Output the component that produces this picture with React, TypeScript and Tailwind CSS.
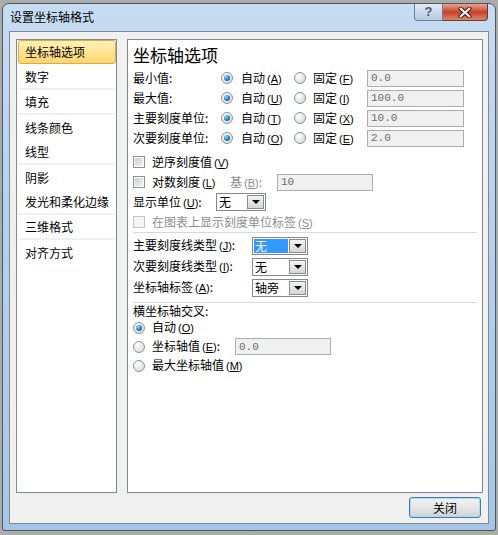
import React from "react";

const font = "font-['Noto_Sans_CJK_SC','Microsoft_YaHei',sans-serif]";

const Mn: React.FC<{k: string}> = ({k}) => (
    <span className="font-['Liberation_Sans',sans-serif] text-[11px] ml-[2px]">(<u>{k}</u>)</span>
);

const Radio: React.FC<{checked?: boolean}> = ({checked}) => (
    <span className="w-[12px] h-[12px] rounded-full border border-[#8f9499] bg-radial-[at_35%_30%] from-white to-[#cfd2d6] flex items-center justify-center shrink-0">
        {checked && <span className="w-[6px] h-[6px] rounded-full bg-radial-[at_35%_30%] from-[#9bd8ff] via-[#2a86cc] to-[#0b3f7a]"/>}
    </span>
);

const Checkbox: React.FC<{disabled?: boolean}> = ({disabled}) => (
    <span className={`w-[12px] h-[12px] border shrink-0 flex items-center justify-center ${disabled ? "border-[#c5c5c5] bg-[#f4f4f4]" : "border-[#8e8f8f] bg-white"}`}>
        <span className={`w-[8px] h-[8px] ${disabled ? "bg-[#f4f4f4]" : "bg-linear-to-br from-[#c9cdd2] to-[#f4f4f4]"}`}/>
    </span>
);

const Input: React.FC<{value: string; className: string}> = ({value, className}) => (
    <div className={`h-[17px] border border-[#abadb3] bg-[#f0f0f0] flex items-center pl-[3px] font-['Liberation_Mono',monospace] text-[11px] text-[#6d6d6d] ${className}`}>
        {value}
    </div>
);

const Select: React.FC<{value: string; className: string; focus?: boolean}> = ({value, className, focus}) => (
    <div className={`h-[18px] border border-[#828790] bg-white flex items-stretch ${className}`}>
        <div className="flex-1 flex items-stretch p-[1px]">
            <span className={`flex-1 flex items-center pl-[1px] ${focus ? "bg-[#3399ff] text-white" : ""}`}>{value}</span>
        </div>
        <div className="w-[17px] m-[1px] ml-0 border border-[#8a8a8a] bg-linear-to-b from-[#f4f4f4] to-[#d6d6d6] flex items-center justify-center">
            <span className="w-0 h-0 border-x-[4px] border-x-transparent border-t-[4px] border-t-black"/>
        </div>
    </div>
);

const navItems = [
    {name: "坐标轴选项", sep: false},
    {name: "数字", sep: true},
    {name: "填充", sep: true},
    {name: "线条颜色", sep: false},
    {name: "线型", sep: true},
    {name: "阴影", sep: false},
    {name: "发光和柔化边缘", sep: true},
    {name: "三维格式", sep: true},
    {name: "对齐方式", sep: false},
];

const axisRows = [
    {label: "最小值:", auto: "A", fixed: "F", value: "0.0"},
    {label: "最大值:", auto: "U", fixed: "I", value: "100.0"},
    {label: "主要刻度单位:", auto: "T", fixed: "X", value: "10.0"},
    {label: "次要刻度单位:", auto: "O", fixed: "E", value: "2.0"},
];

export default function App() {
    return (
        <div className={`w-[498px] h-[535px] overflow-hidden bg-[#a9aca9] pt-[3px] pl-[2px] text-[12px] leading-[14px] text-black ${font}`}>
            <div className="w-[494px] h-[528px] rounded-t-[7px] rounded-b-[3px] border border-[#4b5866] bg-linear-to-b from-[#c6dcf2] via-[#b3cfeb] to-[#a7c6e6] flex flex-col px-[6px] pb-[6px]">
                {/* title bar */}
                <div className="h-[27px] -mx-[6px] flex items-start justify-between">
                    <span className="pl-[7px] pt-[6px]">设置坐标轴格式</span>
                    <div className="flex mr-[7px]">
                        <div className="w-[29px] h-[17px] rounded-bl-[4px] border border-t-0 border-[#6b7f96] bg-linear-to-b from-[#e3ecf6] via-[#c9d8e9] to-[#b7cbe2] flex items-center justify-center font-['Liberation_Sans',sans-serif] font-bold text-[13px] text-[#4d5a68]">?</div>
                        <div className="w-[45px] h-[17px] rounded-br-[4px] border border-l-0 border-t-0 border-[#6b3a30] bg-linear-to-b from-[#eaa393] via-[#c83e28] to-[#dc8468] flex items-center justify-center">
                            <svg width="14" height="11" viewBox="0 0 14 11">
                                <path d="M2.5 1.5 L11.5 9.5 M11.5 1.5 L2.5 9.5" stroke="#3a1a14" strokeWidth="4" strokeLinecap="round"/>
                                <path d="M2.5 1.5 L11.5 9.5 M11.5 1.5 L2.5 9.5" stroke="#ffffff" strokeWidth="2" strokeLinecap="round"/>
                            </svg>
                        </div>
                    </div>
                </div>

                {/* client area */}
                <div className="flex-1 bg-[#f0f0f0] border border-[#7d8b99] flex flex-col pl-[6px] pr-[5px] pt-[7px]">
                    <div className="flex gap-[10px] h-[454px]">
                        {/* nav */}
                        <div className="w-[101px] border border-[#828790] bg-white">
                            {navItems.map((item, i) => (
                                <div key={item.name} className={`h-[25px] ${item.sep ? "border-b-2 border-[#f0f0f4] mx-[1px]" : ""}`}>
                                    {i === 0 ? (
                                        <div className="ml-[1px] w-[98px] h-[24px] rounded-[3px] border border-[#dcac42] bg-linear-to-b from-[#fff1b8] to-[#fdd66c] flex items-center pl-[6px]">
                                            {item.name}
                                        </div>
                                    ) : (
                                        <div className={`h-full flex items-center ${item.sep ? "pl-[7px]" : "pl-[8px]"}`}>{item.name}</div>
                                    )}
                                </div>
                            ))}
                        </div>

                        {/* content */}
                        <div className="w-[356px] border border-[#828790] bg-white pl-[5px] pr-[5px] pt-[4px]">
                            <div className="text-[17px] leading-[22px]">坐标轴选项</div>

                            <div className="mt-[2px]">
                                {axisRows.map((r) => (
                                    <div key={r.label} className="flex items-center h-[20px]">
                                        <span className="w-[88px]">{r.label}</span>
                                        <Radio checked/>
                                        <span className="ml-[8px] w-[53px]">自动<Mn k={r.auto}/></span>
                                        <Radio/>
                                        <span className="ml-[7px] w-[54px]">固定<Mn k={r.fixed}/></span>
                                        <Input value={r.value} className="w-[97px]"/>
                                    </div>
                                ))}
                            </div>

                            <div className="mt-[4px]">
                                <div className="flex items-center h-[20px]">
                                    <Checkbox/>
                                    <span className="ml-[7px]">逆序刻度值<Mn k="V"/></span>
                                </div>
                                <div className="flex items-center h-[20px]">
                                    <Checkbox/>
                                    <span className="ml-[7px] w-[78px]">对数刻度<Mn k="L"/></span>
                                    <span className="w-[47px] text-[#8d8d8d]">基<Mn k="B"/>:</span>
                                    <Input value="10" className="w-[96px]"/>
                                </div>
                                <div className="flex items-center h-[20px]">
                                    <span className="w-[83px]">显示单位<Mn k="U"/>:</span>
                                    <Select value="无" className="w-[50px]"/>
                                </div>
                                <div className="flex items-center h-[20px] text-[#8d8d8d]">
                                    <Checkbox disabled/>
                                    <span className="ml-[7px]">在图表上显示刻度单位标签<Mn k="S"/></span>
                                </div>
                            </div>

                            <div className="h-px bg-[#d9d9d9]"/>

                            <div className="mt-[2px]">
                                {[
                                    {label: "主要刻度线类型", k: "J", value: "无", focus: true},
                                    {label: "次要刻度线类型", k: "I", value: "无", focus: false},
                                    {label: "坐标轴标签", k: "A", value: "轴旁", focus: false},
                                ].map((r) => (
                                    <div key={r.label} className="flex items-center h-[21px]">
                                        <span className="w-[119px]">{r.label}<Mn k={r.k}/>:</span>
                                        <Select value={r.value} focus={r.focus} className="w-[56px]"/>
                                    </div>
                                ))}
                            </div>

                            <div className="mt-[4px] h-px bg-[#d9d9d9]"/>

                            <div className="h-[15px] flex items-center">横坐标轴交叉:</div>
                            <div className="flex items-center h-[19px]">
                                <Radio checked/>
                                <span className="ml-[7px]">自动<Mn k="O"/></span>
                            </div>
                            <div className="flex items-center h-[19px]">
                                <Radio/>
                                <span className="ml-[7px] w-[83px]">坐标轴值<Mn k="E"/>:</span>
                                <Input value="0.0" className="w-[96px]"/>
                            </div>
                            <div className="flex items-center h-[19px]">
                                <Radio/>
                                <span className="ml-[7px]">最大坐标轴值<Mn k="M"/></span>
                            </div>
                        </div>
                    </div>

                    <div className="flex justify-end pr-[2px] mt-[4px]">
                        <button className="w-[72px] h-[21px] rounded-[3px] border border-[#3c7fb1] bg-linear-to-b from-[#f3f3f3] via-[#e6e6e6] to-[#d2d2d2] shadow-[inset_0_0_0_1px_#a6dcf6] flex items-center justify-center">
                            关闭
                        </button>
                    </div>
                </div>
            </div>
        </div>
    );
}
